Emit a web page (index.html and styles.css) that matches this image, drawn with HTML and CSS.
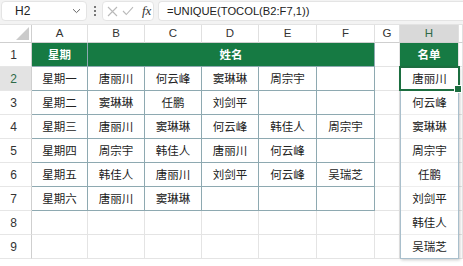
FILE: index.html
```html
<!DOCTYPE html>
<html lang="zh">
<head>
<meta charset="utf-8">
<link rel="stylesheet" href="styles.css">
</head>
<body>
<div class="fbar">
  <div class="namebox"><span class="ref">H2</span><svg class="chev" width="9" height="6" viewBox="0 0 9 6"><path d="M1 1.2 L4.5 4.6 L8 1.2" fill="none" stroke="#666" stroke-width="1"/></svg></div>
  <div class="dots"><i></i><i></i><i></i></div>
  <div class="btns">
    <svg width="11" height="11" viewBox="0 0 11 11"><path d="M1 1 L10 10 M10 1 L1 10" stroke="#b9b9b9" stroke-width="1.1" fill="none"/></svg>
    <svg width="12" height="10" viewBox="0 0 12 10"><path d="M1 5 L4.3 8.5 L11 1.2" stroke="#b9b9b9" stroke-width="1.1" fill="none"/></svg>
    <span class="fx">fx</span>
  </div>
  <div class="formula">=UNIQUE(TOCOL(B2:F7,1))</div>
</div>
<div class="sheet">
  <div class="corner"><span class="tri"></span></div>
  <div class="ch">A</div><div class="ch">B</div><div class="ch">C</div><div class="ch">D</div><div class="ch">E</div><div class="ch">F</div><div class="ch">G</div><div class="ch chs">H</div><div class="ch"></div>

  <div class="rh">1</div><div class="c t hd hdA">星期</div><div class="c t hd merged">姓名</div><div class="c"></div><div class="c hd hdH">名单</div><div class="c"></div>

  <div class="rh rhs">2</div><div class="c t">星期一</div><div class="c t">唐丽川</div><div class="c t">何云峰</div><div class="c t">窦琳琳</div><div class="c t">周宗宇</div><div class="c t"></div><div class="c"></div>
  <div class="spill">
    <div class="h sel">唐丽川</div>
    <div class="h">何云峰</div>
    <div class="h">窦琳琳</div>
    <div class="h">周宗宇</div>
    <div class="h">任鹏</div>
    <div class="h">刘剑平</div>
    <div class="h">韩佳人</div>
    <div class="h">吴瑞芝</div>
  </div>
  <div class="c"></div>

  <div class="rh">3</div><div class="c t">星期二</div><div class="c t">窦琳琳</div><div class="c t">任鹏</div><div class="c t">刘剑平</div><div class="c t"></div><div class="c t"></div><div class="c"></div><div class="c"></div>

  <div class="rh">4</div><div class="c t">星期三</div><div class="c t">唐丽川</div><div class="c t">窦琳琳</div><div class="c t">何云峰</div><div class="c t">韩佳人</div><div class="c t">周宗宇</div><div class="c"></div><div class="c"></div>

  <div class="rh">5</div><div class="c t">星期四</div><div class="c t">周宗宇</div><div class="c t">韩佳人</div><div class="c t">唐丽川</div><div class="c t">何云峰</div><div class="c t"></div><div class="c"></div><div class="c"></div>

  <div class="rh">6</div><div class="c t">星期五</div><div class="c t">韩佳人</div><div class="c t">唐丽川</div><div class="c t">刘剑平</div><div class="c t">何云峰</div><div class="c t">吴瑞芝</div><div class="c"></div><div class="c"></div>

  <div class="rh">7</div><div class="c t">星期六</div><div class="c t">唐丽川</div><div class="c t">窦琳琳</div><div class="c t"></div><div class="c t"></div><div class="c t"></div><div class="c"></div><div class="c"></div>

  <div class="rh">8</div><div class="c"></div><div class="c"></div><div class="c"></div><div class="c"></div><div class="c"></div><div class="c"></div><div class="c"></div><div class="c"></div>

  <div class="rh">9</div><div class="c"></div><div class="c"></div><div class="c"></div><div class="c"></div><div class="c"></div><div class="c"></div><div class="c"></div><div class="c"></div>
</div>
</body>
</html>
```
FILE: styles.css
```css
* { box-sizing: border-box; }
html, body { margin: 0; padding: 0; background: #fff; }
body {
  width: 463px; height: 266px; overflow: hidden;
  font-family: "Liberation Sans", "Noto Sans CJK SC", sans-serif;
  color: #222;
}
.fbar {
  height: 25px;
  background: #f3f3f3;
  border-bottom: 1px solid #e3e3e3;
  display: flex;
  align-items: flex-start;
  padding: 1px 0 0 1px;
}
.namebox {
  width: 86px; height: 20px;
  background: #fff;
  border: 1px solid #e4e4e4;
  border-radius: 4px;
  display: flex; align-items: center; justify-content: space-between;
  padding: 0 5px 0 13px;
  font-size: 12px; color: #222;
}
.dots {
  width: 15px; height: 20px;
  display: flex; flex-direction: column; align-items: center; justify-content: center; gap: 2px;
}
.dots i { display: block; width: 2px; height: 2px; background: #777; }
.btns {
  width: 52px; height: 20px;
  background: #fff;
  border: 1px solid #e4e4e4;
  border-radius: 4px;
  display: flex; align-items: center;
  padding: 0 0 0 4px; gap: 4px;
}
.fx {
  font-family: "Liberation Serif", serif;
  font-style: italic;
  font-size: 13px;
  color: #333;
  margin-left: 4px;
}
.formula {
  flex: 1;
  margin-left: 4px;
  height: 20px;
  background: #fff;
  border: 1px solid #e4e4e4;
  border-right: none;
  border-radius: 4px 0 0 4px;
  font-size: 11.2px;
  line-height: 18px;
  padding-left: 8px;
  color: #222;
}
.sheet {
  display: grid;
  grid-template-columns: 32px 56px 57px 57px 57px 58px 58px 25px 59px 1fr;
  grid-template-rows: 18px repeat(9, 24px) 1fr;
  height: 241px;
  font-family: "Noto Sans CJK SC", sans-serif;
}
.corner {
  border-right: 1px solid #cfcfcf;
  border-bottom: 1px solid #cfcfcf;
  position: relative;
}
.tri {
  position: absolute; right: 2px; bottom: 2px;
  width: 0; height: 0;
  border-left: 13px solid transparent;
  border-bottom: 13px solid #cbcbcb;
}
.ch {
  border-right: 1px solid #e0e0e0;
  border-bottom: 1px solid #cfcfcf;
  text-align: center;
  font-family: "Liberation Sans", sans-serif;
  font-size: 11.5px; line-height: 17px; color: #333;
}
.chs { background: #d9d9d9; color: #2d6a47; }
.rh {
  border-right: 1px solid #cfcfcf;
  border-bottom: 1px solid #e6e6e6;
  text-align: center;
  font-family: "Liberation Sans", sans-serif;
  font-size: 12px; line-height: 24px; color: #333;
  padding-right: 4px;
}
.rhs { background: #e3e3e3; color: #2d6a47; }
.c {
  border-right: 1px solid #e4e4e4;
  border-bottom: 1px solid #e4e4e4;
  text-align: center;
  font-size: 11.5px; line-height: 23px; color: #222;
  white-space: nowrap;
}
.c.t { border-right-color: #8ea9b1; border-bottom-color: #8ea9b1; }
.hd { background: #167a43; color: #fff; font-weight: bold; }
.hdA { border-right-color: #d5e6dc; }
.merged { grid-column: span 5; }
.hdH { border-bottom-color: #8ea9b1; }
.spill {
  grid-row: span 8;
  display: flex; flex-direction: column;
  border-left: 1px solid #a9bfcc;
  border-right: 1px solid #a9bfcc;
  border-bottom: 1px solid #a9bfcc;
  box-shadow: 1px 1px 3px rgba(0,0,0,0.22);
  position: relative;
  z-index: 1;
  background: #fff;
}
.h {
  height: 24px;
  flex: none;
  text-align: center;
  font-size: 11.5px; line-height: 23px; color: #222;
  border-bottom: 1px solid #eeeeee;
  white-space: nowrap;
}
.h:last-child { border-bottom: none; }
.h.sel {
  border: 2px solid #1c6e40;
  margin: -1px -2px 0 -2px;
  height: 25px;
  line-height: 21px;
  position: relative;
}
.h.sel::after {
  content: "";
  position: absolute; right: -4px; bottom: -4px;
  width: 6px; height: 6px;
  background: #1c6e40;
  border: 1px solid #fff;
}
```
